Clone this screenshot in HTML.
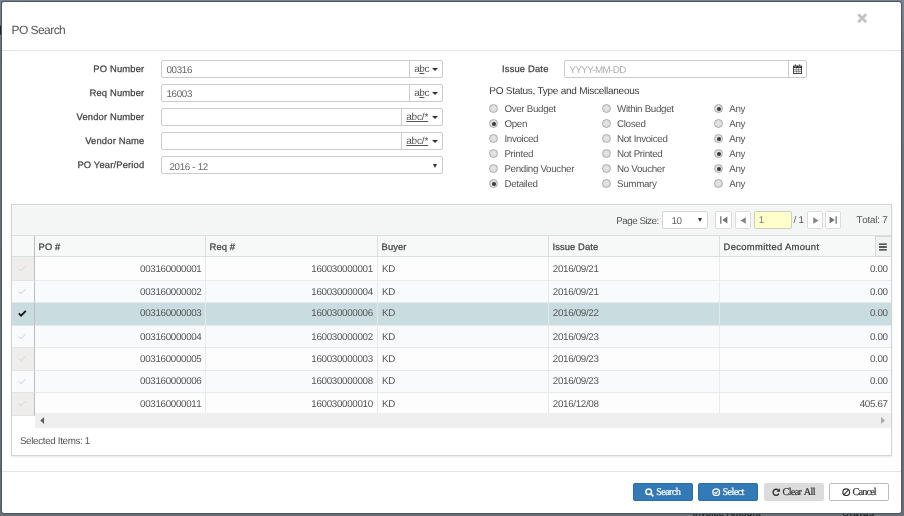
<!DOCTYPE html>
<html lang="en">
<head>
<meta charset="utf-8">
<title>PO Search</title>
<style>
*{box-sizing:border-box;margin:0;padding:0}
html,body{width:904px;height:516px;overflow:hidden}
body{background:linear-gradient(#7b8796 0,#7b8796 10px,#6e7580 60px,#6b7078 100%);font-family:"Liberation Sans",sans-serif;font-size:9.8px;letter-spacing:-.33px;color:#555;position:relative;text-rendering:geometricPrecision}
.abs{position:absolute}
.bgtxt{color:#1f2226;-webkit-text-stroke:.3px #1f2226;font-size:9.6px;line-height:14px;white-space:nowrap;letter-spacing:.2px}
.modal{left:1px;top:1px;width:901px;height:513px;background:#fff;border:1px solid #4d5867;border-radius:3px;box-shadow:0 0 1px rgba(40,48,58,.6)}
.title{left:11.5px;top:21.6px;font-size:12px;color:#555;line-height:16px;white-space:nowrap;letter-spacing:-.55px}
.hr{height:1px;background:#e5e5e5}
.lbl{color:#444;-webkit-text-stroke:.25px #444;white-space:nowrap;line-height:14px;font-size:9.4px;letter-spacing:.17px}
.r{text-align:right}
.inp{border:1px solid #ccc;border-radius:2px;background:#fff;height:18px}
.val{color:#666;line-height:14px;white-space:nowrap;margin-top:1.2px}
.addon{border-left:1px solid #ccc;height:16px;top:0;color:#555;line-height:14px;white-space:nowrap}
.caret{width:0;height:0;border-left:3px solid transparent;border-right:3px solid transparent;border-top:3px solid #333}
.tri{width:0;height:0;border-left:2.7px solid transparent;border-right:2.7px solid transparent;border-top:4.6px solid #333}
.radio{width:9px;height:9px;border-radius:50%;border:1px solid #acacac;background:radial-gradient(circle at 50% 45%,#e6e6e6 0,#d6d6d6 100%)}
.radio.on::after{content:"";position:absolute;left:1.5px;top:1.5px;width:4px;height:4px;border-radius:50%;background:#3a3a3a}
.rl{color:#555;white-space:nowrap;line-height:14px;margin-top:1.2px}
.grid{left:11px;top:204px;width:881px;height:252px;border:1px solid #d3d6d6;background:#fff;box-shadow:0 1px 2px rgba(0,0,0,.10)}
.cell{white-space:nowrap;line-height:14px;color:#555;font-kerning:none;margin-top:1.2px}
.hd{white-space:nowrap;line-height:14px;color:#444;-webkit-text-stroke:.25px #444;font-size:9.4px;letter-spacing:.08px}
.pbtn{border:1px solid #dcdcdc;border-radius:2px;background:#fff;height:18px}
.btn{height:18px;border-radius:2px;font-family:"Liberation Serif",serif;font-size:10.3px;letter-spacing:-.7px;line-height:16px;white-space:nowrap;width:60px;border:1px solid;-webkit-text-stroke:.2px}
.btn span{position:absolute;top:1.4px}
.btn svg{position:absolute;top:3.5px}
</style>
</head>
<body>
<div class="abs" style="left:0;top:0;width:904px;height:516px;will-change:transform">
<div class="abs" style="left:0;top:25px;width:3px;height:10px;background:#1c2430;border-radius:2px"></div>
<div class="abs bgtxt" style="left:692.4px;top:507px">Invoice Amount</div>
<div class="abs bgtxt" style="left:842.3px;top:507px;letter-spacing:.9px">Status</div>
<div class="abs modal"></div>

<div class="abs title">PO Search</div>
<svg class="abs" style="left:857px;top:13px" width="10.4" height="10.4" viewBox="0 0 10 10"><path d="M1.2 1.2 L8.8 8.8 M8.8 1.2 L1.2 8.8" stroke="#c2c2c2" stroke-width="2.7" stroke-linecap="butt"/></svg>
<div class="abs hr" style="left:2px;top:50px;width:899px"></div>

<div class="abs lbl r" style="left:30px;width:114.4px;top:61.5px">PO Number</div>
<div class="abs lbl r" style="left:30px;width:114.4px;top:85.5px">Req Number</div>
<div class="abs lbl r" style="left:30px;width:114.4px;top:109.5px">Vendor Number</div>
<div class="abs lbl r" style="left:30px;width:114.4px;top:133.5px">Vendor Name</div>
<div class="abs lbl r" style="left:30px;width:114.4px;top:157.5px">PO Year/Period</div>
<div class="abs inp" style="left:161px;top:60px;width:282px"><span class="abs val" style="left:4.5px;top:1.5px">00316</span><div class="abs addon" style="left:247px;width:33px"><span class="abs" style="left:4.3px;top:1.8px;font-size:10px;letter-spacing:-.5px">a<u>b</u>c</span><span class="abs caret" style="left:22px;top:7px"></span></div></div>
<div class="abs inp" style="left:161px;top:84px;width:282px"><span class="abs val" style="left:4.5px;top:1.5px">16003</span><div class="abs addon" style="left:247px;width:33px"><span class="abs" style="left:4.3px;top:1.8px;font-size:10px;letter-spacing:-.5px">a<u>b</u>c</span><span class="abs caret" style="left:22px;top:7px"></span></div></div>
<div class="abs inp" style="left:161px;top:108px;width:282px"><div class="abs addon" style="left:239px;width:41px"><span class="abs" style="left:4.2px;top:1.8px;font-size:10px"><u style="letter-spacing:-.15px">abc/*</u></span><span class="abs caret" style="left:30px;top:7px"></span></div></div>
<div class="abs inp" style="left:161px;top:132px;width:282px"><div class="abs addon" style="left:239px;width:41px"><span class="abs" style="left:4.2px;top:1.8px;font-size:10px"><u style="letter-spacing:-.15px">abc/*</u></span><span class="abs caret" style="left:30px;top:7px"></span></div></div>
<div class="abs inp" style="left:161px;top:156px;width:282px"><span class="abs val" style="left:7.5px;top:2.5px">2016 - 12</span><span class="abs tri" style="left:271px;top:6.5px"></span></div>
<div class="abs lbl" style="left:502px;top:61.5px">Issue Date</div>
<div class="abs inp" style="left:564px;top:60px;width:243px"><span class="abs val" style="left:4.5px;top:1.5px;color:#b0b0b0;letter-spacing:-.6px">YYYY-MM-DD</span><div class="abs addon" style="left:223px;width:19px">
<svg class="abs" style="left:4.4px;top:3px" width="9" height="10" viewBox="0 0 9 10"><rect x="0" y="1.6" width="9" height="8.4" rx=".6" fill="#333"/><rect x=".9" y="4" width="7.2" height="5.1" fill="#fff"/><path d="M3.3 4V9.2M5.7 4V9.2M.9 5.7H8.1M.9 7.4H8.1" stroke="#555" stroke-width=".6"/><rect x="1.6" y=".2" width="1.6" height="2.6" rx=".5" fill="#333" stroke="#fff" stroke-width=".4"/><rect x="5.8" y=".2" width="1.6" height="2.6" rx=".5" fill="#333" stroke="#fff" stroke-width=".4"/></svg></div></div>
<div class="abs" style="left:489.3px;top:85px;font-size:10px;letter-spacing:-.25px;color:#3c3c3c;line-height:14px;white-space:nowrap">PO Status, Type and Miscellaneous</div>
<span class="abs radio" style="left:489px;top:104.3px"></span><span class="abs rl" style="left:504.4px;top:102.0px">Over Budget</span>
<span class="abs radio" style="left:601.5px;top:104.3px"></span><span class="abs rl" style="left:617px;top:102.0px">Within Budget</span>
<span class="abs radio on" style="left:714px;top:104.3px"></span><span class="abs rl" style="left:729.2px;top:102.0px">Any</span>
<span class="abs radio on" style="left:489px;top:119.3px"></span><span class="abs rl" style="left:504.4px;top:117.0px">Open</span>
<span class="abs radio" style="left:601.5px;top:119.3px"></span><span class="abs rl" style="left:617px;top:117.0px">Closed</span>
<span class="abs radio" style="left:714px;top:119.3px"></span><span class="abs rl" style="left:729.2px;top:117.0px">Any</span>
<span class="abs radio" style="left:489px;top:134.3px"></span><span class="abs rl" style="left:504.4px;top:132.0px">Invoiced</span>
<span class="abs radio" style="left:601.5px;top:134.3px"></span><span class="abs rl" style="left:617px;top:132.0px">Not Invoiced</span>
<span class="abs radio on" style="left:714px;top:134.3px"></span><span class="abs rl" style="left:729.2px;top:132.0px">Any</span>
<span class="abs radio" style="left:489px;top:149.3px"></span><span class="abs rl" style="left:504.4px;top:147.0px">Printed</span>
<span class="abs radio" style="left:601.5px;top:149.3px"></span><span class="abs rl" style="left:617px;top:147.0px">Not Printed</span>
<span class="abs radio on" style="left:714px;top:149.3px"></span><span class="abs rl" style="left:729.2px;top:147.0px">Any</span>
<span class="abs radio" style="left:489px;top:164.3px"></span><span class="abs rl" style="left:504.4px;top:162.0px">Pending Voucher</span>
<span class="abs radio" style="left:601.5px;top:164.3px"></span><span class="abs rl" style="left:617px;top:162.0px">No Voucher</span>
<span class="abs radio on" style="left:714px;top:164.3px"></span><span class="abs rl" style="left:729.2px;top:162.0px">Any</span>
<span class="abs radio on" style="left:489px;top:179.3px"></span><span class="abs rl" style="left:504.4px;top:177.0px">Detailed</span>
<span class="abs radio" style="left:601.5px;top:179.3px"></span><span class="abs rl" style="left:617px;top:177.0px">Summary</span>
<span class="abs radio" style="left:714px;top:179.3px"></span><span class="abs rl" style="left:729.2px;top:177.0px">Any</span>
<div class="abs grid"></div>
<div class="abs" style="left:12px;top:205px;width:879px;height:31px;background:#f4f6f6;border-bottom:1px solid #d8e0e0"></div>
<div class="abs" style="left:12px;top:236px;width:879px;height:21px;background:#f7f9f9;border-bottom:1px solid #d8e0e0"></div>
<div class="abs cell" style="left:616.3px;top:213.5px;letter-spacing:-.5px">Page Size:</div>
<div class="abs inp" style="left:662px;top:211px;width:46px;border-color:#d6d6d6"><span class="abs val" style="left:8.4px;top:2px">10</span><span class="abs tri" style="left:34.5px;top:5.5px"></span></div>
<div class="abs pbtn" style="left:715px;top:211px;width:17px"><svg class="abs" style="left:3.5px;top:4px" width="8" height="8" viewBox="0 0 8 8"><path d="M.8 .3V7.7" stroke="#747474" stroke-width="1.3"/><path d="M7.4 .6V7.4L2.3 4Z" fill="#747474"/></svg></div>
<div class="abs pbtn" style="left:735px;top:211px;width:16px"><svg class="abs" style="left:4px;top:4.5px" width="6" height="7" viewBox="0 0 6 7"><path d="M5.8 .2V6.8L.4 3.5Z" fill="#858585"/></svg></div>
<div class="abs inp" style="left:754px;top:211px;width:37.5px;background:#ffffcc;border-color:#d0d0c0"><span class="abs val" style="left:3.8px;top:.9px;color:#7a7a7a">1</span></div>
<div class="abs cell" style="left:793.6px;top:212.5px">/ 1</div>
<div class="abs pbtn" style="left:807px;top:211px;width:16px"><svg class="abs" style="left:4.5px;top:4.5px" width="6" height="7" viewBox="0 0 6 7"><path d="M.2 .2V6.8L5.6 3.5Z" fill="#858585"/></svg></div>
<div class="abs pbtn" style="left:825px;top:211px;width:16px"><svg class="abs" style="left:3px;top:4px" width="8" height="8" viewBox="0 0 8 8"><path d="M7.2 .3V7.7" stroke="#747474" stroke-width="1.3"/><path d="M.6 .6V7.4L5.7 4Z" fill="#747474"/></svg></div>
<div class="abs cell" style="left:856.4px;top:213px;letter-spacing:-.2px">Total: 7</div>
<div class="abs" style="left:34px;top:236px;width:1px;height:21px;background:#bdbdbd"></div><div class="abs hd" style="left:38.6px;top:240.2px">PO #</div>
<div class="abs" style="left:205px;top:236px;width:1px;height:21px;background:#d8e0e0"></div><div class="abs hd" style="left:209.6px;top:240.2px">Req #</div>
<div class="abs" style="left:377px;top:236px;width:1px;height:21px;background:#d8e0e0"></div><div class="abs hd" style="left:381.6px;top:240.2px">Buyer</div>
<div class="abs" style="left:548px;top:236px;width:1px;height:21px;background:#d8e0e0"></div><div class="abs hd" style="left:552.6px;top:240.2px">Issue Date</div>
<div class="abs" style="left:719px;top:236px;width:1px;height:21px;background:#d8e0e0"></div><div class="abs hd" style="left:723.6px;top:240.2px;letter-spacing:.34px">Decommitted Amount</div>
<div class="abs" style="left:875px;top:236px;width:16px;height:21px;border:1px solid #d4d8d8;border-right:0;background:#f1f2f2"><svg class="abs" style="left:2.6px;top:5.7px" width="8" height="8" viewBox="0 0 8 8"><path d="M0 1.2H7.8M0 4H7.8M0 6.8H7.8" stroke="#262626" stroke-width="1.3"/></svg></div>
<div class="abs" style="left:12px;top:257px;width:879px;height:24px;background:#fdfdfd;border-bottom:1px solid #e6ecec"></div>
<div class="abs" style="left:12px;top:257px;width:23px;height:24px;background:#eeedec;border-bottom:1px solid #e4e4e4;border-right:1px solid #bdbdbd"></div>
<svg class="abs" style="left:18px;top:264.6px" width="8.6" height="6.7" viewBox="0 0 9 7"><path d="M.8 3.6L3.2 6L8.2 .9" fill="none" stroke="#dedede" stroke-width="1.4"/></svg>
<div class="abs" style="left:205px;top:257px;width:1px;height:24px;background:#e6ecec"></div>
<div class="abs" style="left:377px;top:257px;width:1px;height:24px;background:#e6ecec"></div>
<div class="abs" style="left:548px;top:257px;width:1px;height:24px;background:#e6ecec"></div>
<div class="abs" style="left:719px;top:257px;width:1px;height:24px;background:#e6ecec"></div>
<div class="abs cell r" style="left:40px;width:161.5px;top:261.8px">003160000001</div>
<div class="abs cell r" style="left:210px;width:162.8px;top:261.8px">160030000001</div>
<div class="abs cell" style="left:382px;top:261.8px">KD</div>
<div class="abs cell" style="left:552.8px;top:261.8px">2016/09/21</div>
<div class="abs cell r" style="left:730px;width:157.7px;top:261.8px">0.00</div>
<div class="abs" style="left:12px;top:281px;width:879px;height:22px;background:#f8fafb;border-bottom:1px solid #e6ecec"></div>
<div class="abs" style="left:12px;top:281px;width:23px;height:22px;background:#f8fafb;border-bottom:1px solid #e4e4e4;border-right:1px solid #bdbdbd"></div>
<svg class="abs" style="left:18px;top:287.6px" width="8.6" height="6.7" viewBox="0 0 9 7"><path d="M.8 3.6L3.2 6L8.2 .9" fill="none" stroke="#dedede" stroke-width="1.4"/></svg>
<div class="abs" style="left:205px;top:281px;width:1px;height:22px;background:#e6ecec"></div>
<div class="abs" style="left:377px;top:281px;width:1px;height:22px;background:#e6ecec"></div>
<div class="abs" style="left:548px;top:281px;width:1px;height:22px;background:#e6ecec"></div>
<div class="abs" style="left:719px;top:281px;width:1px;height:22px;background:#e6ecec"></div>
<div class="abs cell r" style="left:40px;width:161.5px;top:284.8px">003160000002</div>
<div class="abs cell r" style="left:210px;width:162.8px;top:284.8px">160030000004</div>
<div class="abs cell" style="left:382px;top:284.8px">KD</div>
<div class="abs cell" style="left:552.8px;top:284.8px">2016/09/21</div>
<div class="abs cell r" style="left:730px;width:157.7px;top:284.8px">0.00</div>
<div class="abs" style="left:12px;top:303px;width:879px;height:23px;background:#c9dde1;border-bottom:1px solid #e6ecec"></div>
<div class="abs" style="left:12px;top:303px;width:23px;height:23px;background:#c9dde1;border-bottom:1px solid #e4e4e4;border-right:1px solid #bdbdbd"></div>
<svg class="abs" style="left:18px;top:310.1px" width="8.6" height="6.7" viewBox="0 0 9 7"><path d="M.8 3.6L3.2 6L8.2 .9" fill="none" stroke="#1a1a1a" stroke-width="1.9"/></svg>
<div class="abs" style="left:205px;top:303px;width:1px;height:23px;background:#dfe9eb"></div>
<div class="abs" style="left:377px;top:303px;width:1px;height:23px;background:#dfe9eb"></div>
<div class="abs" style="left:548px;top:303px;width:1px;height:23px;background:#dfe9eb"></div>
<div class="abs" style="left:719px;top:303px;width:1px;height:23px;background:#dfe9eb"></div>
<div class="abs cell r" style="left:40px;width:161.5px;top:305.8px">003160000003</div>
<div class="abs cell r" style="left:210px;width:162.8px;top:305.8px">160030000006</div>
<div class="abs cell" style="left:382px;top:305.8px">KD</div>
<div class="abs cell" style="left:552.8px;top:305.8px">2016/09/22</div>
<div class="abs cell r" style="left:730px;width:157.7px;top:305.8px">0.00</div>
<div class="abs" style="left:12px;top:326px;width:879px;height:22px;background:#f8fafb;border-bottom:1px solid #e6ecec"></div>
<div class="abs" style="left:12px;top:326px;width:23px;height:22px;background:#f8fafb;border-bottom:1px solid #e4e4e4;border-right:1px solid #bdbdbd"></div>
<svg class="abs" style="left:18px;top:332.6px" width="8.6" height="6.7" viewBox="0 0 9 7"><path d="M.8 3.6L3.2 6L8.2 .9" fill="none" stroke="#dedede" stroke-width="1.4"/></svg>
<div class="abs" style="left:205px;top:326px;width:1px;height:22px;background:#e6ecec"></div>
<div class="abs" style="left:377px;top:326px;width:1px;height:22px;background:#e6ecec"></div>
<div class="abs" style="left:548px;top:326px;width:1px;height:22px;background:#e6ecec"></div>
<div class="abs" style="left:719px;top:326px;width:1px;height:22px;background:#e6ecec"></div>
<div class="abs cell r" style="left:40px;width:161.5px;top:329.8px">003160000004</div>
<div class="abs cell r" style="left:210px;width:162.8px;top:329.8px">160030000002</div>
<div class="abs cell" style="left:382px;top:329.8px">KD</div>
<div class="abs cell" style="left:552.8px;top:329.8px">2016/09/23</div>
<div class="abs cell r" style="left:730px;width:157.7px;top:329.8px">0.00</div>
<div class="abs" style="left:12px;top:348px;width:879px;height:23px;background:#fdfdfd;border-bottom:1px solid #e6ecec"></div>
<div class="abs" style="left:12px;top:348px;width:23px;height:23px;background:#eeedec;border-bottom:1px solid #e4e4e4;border-right:1px solid #bdbdbd"></div>
<svg class="abs" style="left:18px;top:355.1px" width="8.6" height="6.7" viewBox="0 0 9 7"><path d="M.8 3.6L3.2 6L8.2 .9" fill="none" stroke="#dedede" stroke-width="1.4"/></svg>
<div class="abs" style="left:205px;top:348px;width:1px;height:23px;background:#e6ecec"></div>
<div class="abs" style="left:377px;top:348px;width:1px;height:23px;background:#e6ecec"></div>
<div class="abs" style="left:548px;top:348px;width:1px;height:23px;background:#e6ecec"></div>
<div class="abs" style="left:719px;top:348px;width:1px;height:23px;background:#e6ecec"></div>
<div class="abs cell r" style="left:40px;width:161.5px;top:351.8px">003160000005</div>
<div class="abs cell r" style="left:210px;width:162.8px;top:351.8px">160030000003</div>
<div class="abs cell" style="left:382px;top:351.8px">KD</div>
<div class="abs cell" style="left:552.8px;top:351.8px">2016/09/23</div>
<div class="abs cell r" style="left:730px;width:157.7px;top:351.8px">0.00</div>
<div class="abs" style="left:12px;top:371px;width:879px;height:22px;background:#f8fafb;border-bottom:1px solid #e6ecec"></div>
<div class="abs" style="left:12px;top:371px;width:23px;height:22px;background:#f8fafb;border-bottom:1px solid #e4e4e4;border-right:1px solid #bdbdbd"></div>
<svg class="abs" style="left:18px;top:377.6px" width="8.6" height="6.7" viewBox="0 0 9 7"><path d="M.8 3.6L3.2 6L8.2 .9" fill="none" stroke="#dedede" stroke-width="1.4"/></svg>
<div class="abs" style="left:205px;top:371px;width:1px;height:22px;background:#e6ecec"></div>
<div class="abs" style="left:377px;top:371px;width:1px;height:22px;background:#e6ecec"></div>
<div class="abs" style="left:548px;top:371px;width:1px;height:22px;background:#e6ecec"></div>
<div class="abs" style="left:719px;top:371px;width:1px;height:22px;background:#e6ecec"></div>
<div class="abs cell r" style="left:40px;width:161.5px;top:373.8px">003160000006</div>
<div class="abs cell r" style="left:210px;width:162.8px;top:373.8px">160030000008</div>
<div class="abs cell" style="left:382px;top:373.8px">KD</div>
<div class="abs cell" style="left:552.8px;top:373.8px">2016/09/23</div>
<div class="abs cell r" style="left:730px;width:157.7px;top:373.8px">0.00</div>
<div class="abs" style="left:12px;top:393px;width:879px;height:23px;background:#fdfdfd;border-bottom:1px solid #e6ecec"></div>
<div class="abs" style="left:12px;top:393px;width:23px;height:23px;background:#eeedec;border-bottom:1px solid #e4e4e4;border-right:1px solid #bdbdbd"></div>
<svg class="abs" style="left:18px;top:400.1px" width="8.6" height="6.7" viewBox="0 0 9 7"><path d="M.8 3.6L3.2 6L8.2 .9" fill="none" stroke="#dedede" stroke-width="1.4"/></svg>
<div class="abs" style="left:205px;top:393px;width:1px;height:23px;background:#e6ecec"></div>
<div class="abs" style="left:377px;top:393px;width:1px;height:23px;background:#e6ecec"></div>
<div class="abs" style="left:548px;top:393px;width:1px;height:23px;background:#e6ecec"></div>
<div class="abs" style="left:719px;top:393px;width:1px;height:23px;background:#e6ecec"></div>
<div class="abs cell r" style="left:40px;width:161.5px;top:396.8px">003160000011</div>
<div class="abs cell r" style="left:210px;width:162.8px;top:396.8px">160030000010</div>
<div class="abs cell" style="left:382px;top:396.8px">KD</div>
<div class="abs cell" style="left:552.8px;top:396.8px">2016/12/08</div>
<div class="abs cell r" style="left:730px;width:157.7px;top:396.8px">405.67</div>
<div class="abs" style="left:35px;top:413px;width:856px;height:14.5px;background:#efefef"></div>
<svg class="abs" style="left:40.4px;top:416.8px" width="4.2" height="7" viewBox="0 0 4.2 7"><path d="M4.1 .1V6.9L.2 3.5Z" fill="#606060"/></svg>
<svg class="abs" style="left:880.5px;top:416.8px" width="4.2" height="7" viewBox="0 0 4.2 7"><path d="M.1 .1V6.9L4 3.5Z" fill="#a8a8a8"/></svg>
<div class="abs cell" style="left:19.9px;top:433.5px">Selected Items: 1</div>
<div class="abs hr" style="left:2px;top:471px;width:899px"></div>
<div class="abs btn" style="left:633px;top:483px;background:#337ab7;border-color:#2e6da4;color:#fff"><svg style="left:11.2px" width="9" height="9" viewBox="0 0 9 9"><circle cx="3.7" cy="3.7" r="2.8" fill="none" stroke="#fff" stroke-width="1.5"/><path d="M5.7 5.7L8.4 8.4" stroke="#fff" stroke-width="1.7"/></svg><span style="left:22.3px">Search</span></div>
<div class="abs btn" style="left:698px;top:483px;background:#337ab7;border-color:#2e6da4;color:#fff"><svg style="left:13.3px" width="8.4" height="8.4" viewBox="0 0 9 9"><circle cx="4.5" cy="4.5" r="3.6" fill="none" stroke="#fff" stroke-width="1.4"/><path d="M2.6 4.6L4 6L6.5 3.2" stroke="#fff" stroke-width="1.3" fill="none"/></svg><span style="left:23.6px">Select</span></div>
<div class="abs btn" style="left:764px;top:483px;width:59.5px;background:#dcdcdc;border-color:#dcdcdc;color:#333"><svg style="left:7.3px" width="8.4" height="8.4" viewBox="0 0 9 9"><path d="M7.4 6.1A3.3 3.3 0 1 1 6.9 2.4" fill="none" stroke="#333" stroke-width="1.5"/><path d="M8.6 .4V4.1H4.9Z" fill="#333"/></svg><span style="left:17.5px;word-spacing:1.2px">Clear All</span></div>
<div class="abs btn" style="left:829px;top:483px;background:#fff;border-color:#bdbdbd;color:#333"><svg style="left:11.9px" width="8.4" height="8.4" viewBox="0 0 9 9"><circle cx="4.5" cy="4.5" r="3.6" fill="none" stroke="#333" stroke-width="1.2"/><path d="M2 7L7 2" stroke="#333" stroke-width="1.2"/></svg><span style="left:22.6px;letter-spacing:-.9px">Cancel</span></div>
</div>
</body>
</html>
